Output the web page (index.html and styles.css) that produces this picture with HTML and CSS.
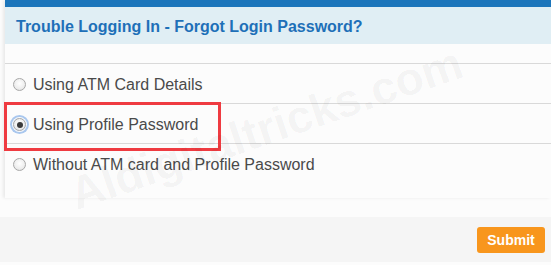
FILE: index.html
```html
<!DOCTYPE html>
<html>
<head>
<meta charset="utf-8">
<link rel="stylesheet" href="styles.css">
</head>
<body>
<div class="page">
  <div class="panel">
    <div class="topbar"></div>
    <div class="header"><h1 class="title">Trouble Logging In - Forgot Login Password?</h1></div>
    <div class="spacer"></div>
    <div class="options">
      <label class="option"><span class="radio"></span><span class="label">Using ATM Card Details</span></label>
      <label class="option"><span class="radio focus checked"></span><span class="label">Using Profile Password</span></label>
      <label class="option"><span class="radio"></span><span class="label">Without ATM card and Profile Password</span></label>
    </div>
  </div>
  <div class="gap"></div>
  <div class="footer"><button class="submit">Submit</button></div>
  <div class="highlight"></div>
  <div class="watermark">Aldigitaltricks.com</div>
</div>
</body>
</html>
```

FILE: styles.css
```css
html, body {
  margin: 0;
  padding: 0;
  background: #fcfcfc;
  font-family: "Liberation Sans", Arial, sans-serif;
}
.page {
  position: relative;
  width: 551px;
  height: 265px;
  overflow: hidden;
}
.panel {
  margin-left: 5px;
  height: 198px;
  background: #fcfcfc;
  box-shadow: -2px 0 3px rgba(0,0,0,0.08);
}
.topbar {
  height: 7px;
  background: #1b75bb;
}
.header {
  height: 37px;
  background: #e0eef4;
  display: flex;
  align-items: center;
  padding-left: 11px;
}
.title {
  margin: 0;
  font-size: 16px;
  font-weight: bold;
  color: #1e70b8;
  line-height: 1;
  position: relative;
  top: 1px;
}
.spacer {
  height: 19px;
}
.options {
  display: flex;
  flex-direction: column;
}
.option {
  height: 39px;
  border-top: 1px solid #d9d9d9;
  display: flex;
  align-items: center;
  padding-left: 8px;
  gap: 7px;
}
.radio {
  width: 13px;
  height: 13px;
  box-sizing: border-box;
  border: 1px solid #a8a8a8;
  border-radius: 50%;
  background: radial-gradient(circle at 50% 40%, #ffffff 0%, #ececec 65%, #d6d6d6 100%);
  position: relative;
  flex: none;
  top: 1px;
}
.radio.focus {
  box-shadow: 0 0 0 1px #fcfcfc, 0 0 0 3px #a9c7ee;
}
.radio.checked::after {
  content: "";
  position: absolute;
  left: 2.5px;
  top: 2.5px;
  width: 6px;
  height: 6px;
  border-radius: 50%;
  background: #3a3a3a;
}
.label {
  font-size: 16px;
  color: #4a4a4a;
  position: relative;
  top: 1px;
}
.gap {
  height: 19px;
}
.footer {
  height: 45px;
  background: #f5f5f5;
  display: flex;
  justify-content: flex-end;
  align-items: center;
  padding-right: 6px;
}
.submit {
  width: 68px;
  height: 26px;
  border: none;
  border-radius: 3px;
  background: #f8961d;
  color: #ffffff;
  font-family: "Liberation Sans", Arial, sans-serif;
  font-size: 14px;
  font-weight: bold;
  padding: 0;
  margin-top: 1px;
}
.highlight {
  position: absolute;
  left: 4px;
  top: 102px;
  width: 217px;
  height: 49px;
  box-sizing: border-box;
  border: 3px solid #ef3b41;
}
.watermark {
  position: absolute;
  left: 266px;
  top: 128px;
  transform: translate(-50%, -50%) rotate(-19deg);
  font-size: 46px;
  font-weight: bold;
  color: rgba(0,0,0,0.045);
  white-space: nowrap;
  pointer-events: none;
}
```
